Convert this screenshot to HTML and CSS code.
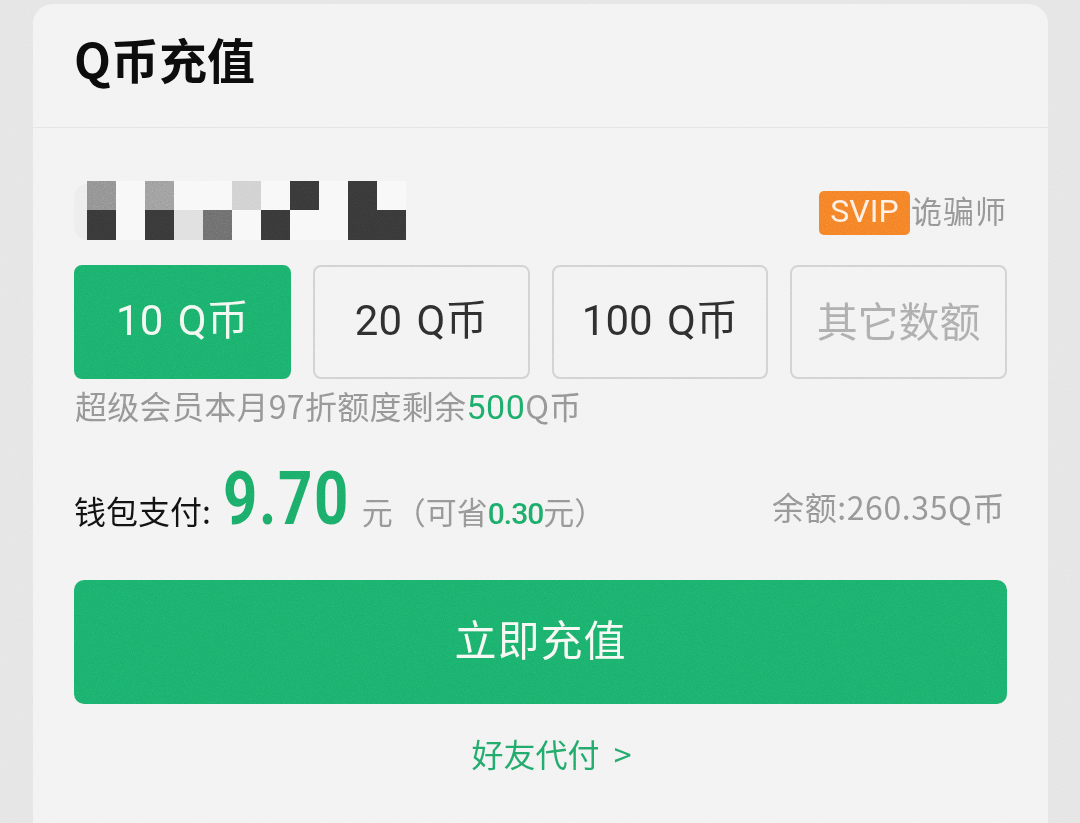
FILE: index.html
```html
<!DOCTYPE html>
<html lang="zh-CN">
<head>
    <meta charset="UTF-8">
    <meta name="viewport" content="width=device-width, initial-scale=1.0">
    <title>Q币充值</title>
    <link rel="stylesheet" href="styles.css">
</head>
<body>
    <div class="card">
        <div class="card-head">
            <h2>Q币充值</h2>
        </div>
        <div class="card-body">
            <div class="account-row">
                <div class="mosaic">
                    <i class="blob"></i>
                    <i class="c-mid"></i><i class="c-light"></i><i class="c-mid2"></i><i class="c-light"></i><i class="c-light"></i><i class="c-pale"></i><i class="c-light"></i><i class="c-dark"></i><i class="c-light"></i><i class="c-dark"></i><i class="c-light"></i>
                    <i class="c-dark"></i><i class="c-light"></i><i class="c-dark"></i><i class="c-pale2"></i><i class="c-mid3"></i><i class="c-light"></i><i class="c-dark"></i><i class="c-light"></i><i class="c-light"></i><i class="c-dark"></i><i class="c-dark"></i>
                </div>
                <div class="vip">
                    <span class="vip-badge">SVIP</span><span class="vip-name">诡骗师</span>
                </div>
            </div>

            <div class="amounts">
                <div class="amount active">10 Q币</div>
                <div class="amount">20 Q币</div>
                <div class="amount">100 Q币</div>
                <div class="amount other">其它数额</div>
            </div>

            <p class="quota">超级会员本月97折额度剩余<span class="green">500</span>Q币</p>

            <div class="pay-row">
                <div class="pay-left">
                    <span class="pay-label">钱包支付:</span>
                    <span class="price">9.70</span>
                    <span class="unit">元</span>
                    <span class="save">（可省<b class="green">0.30</b>元）</span>
                </div>
                <div class="balance">余额:260.35Q币</div>
            </div>

            <button class="submit">立即充值</button>
            <div class="friend-pay">好友代付<span class="arrow">&gt;</span></div>
        </div>
    </div>

    <!-- film grain over the whole shot -->
    <svg class="grain" width="1080" height="823" aria-hidden="true">
        <filter id="noise">
            <feTurbulence type="fractalNoise" baseFrequency="0.9" numOctaves="2" seed="4"/>
            <feColorMatrix type="saturate" values="0"/>
        </filter>
        <rect width="1080" height="823" filter="url(#noise)"/>
    </svg>
</body>
</html>
```

FILE: styles.css
```css
body {
    margin: 0;
    height: 823px;
    overflow: hidden;
    background-color: #e4e4e4;
    font-family: "Noto Sans CJK SC", "Noto Sans", sans-serif;
    color: #909090;
}
.card {
    margin: 4px 32px 0 33px;
    height: 840px;
    background: #f2f2f2;
    border-radius: 20px;
}
.card-head {
    height: 124px;
    box-sizing: border-box;
    border-bottom: 1px solid #e2e2e2;
    padding-left: 41px;
}
h2 {
    margin: 0;
    padding-top: 20px;
    font-size: 48px;
    line-height: 68px;
    font-weight: 700;
    color: #0b0b0b;
}
.card-body {
    padding: 0 41px;
}
.account-row {
    display: flex;
    justify-content: space-between;
    align-items: flex-start;
    height: 137px;
    padding-top: 53px;
    box-sizing: border-box;
}
.mosaic {
    position: relative;
    display: grid;
    grid-template-columns: repeat(11, 29px);
    grid-template-rows: 29px 30px;
    margin-left: 13px;
}
.blob {
    position: absolute;
    left: -13px;
    top: 3px;
    width: 30px;
    height: 56px;
    border-radius: 14px 0 0 14px;
    background: #ececec;
    z-index: 0;
}
.mosaic i:not(.blob) {
    position: relative;
}
.c-dark { background: #363636; }
.c-mid { background: #8e8e8e; }
.c-mid2 { background: #9b9b9b; }
.c-mid3 { background: #6a6a6a; }
.c-pale { background: #cfcfcf; }
.c-pale2 { background: #dedede; }
.c-light { background: #f8f8f8; }
.vip {
    display: flex;
    align-items: flex-start;
    margin-top: 10px;
}
.vip-badge {
    width: 91px;
    height: 44px;
    border-radius: 5px;
    background: #f47d26;
    color: #fdf0e2;
    font-family: Roboto, sans-serif;
    font-size: 32px;
    line-height: 40px;
    text-align: center;
}
.vip-name {
    font-size: 31px;
    line-height: 38px;
    letter-spacing: 1px;
    margin-left: 1px;
    color: #8f8f8f;
}
.amounts {
    display: grid;
    grid-template-columns: repeat(4, 1fr);
    gap: 22px;
}
.amount {
    height: 114px;
    box-sizing: border-box;
    border: 2px solid #cfcfcf;
    border-radius: 8px;
    padding-bottom: 12px;
    display: flex;
    align-items: center;
    justify-content: center;
    font-family: Roboto, "Noto Sans CJK SC", sans-serif;
    font-size: 42px;
    word-spacing: 4px;
    color: #2c2c2c;
}
.amount.active {
    background: #1aad68;
    border-color: #1aad68;
    color: #f2f7f1;
}
.amount.other {
    font-size: 41px;
    padding-bottom: 6px;
    color: #a9a9a9;
}
.quota {
    margin: 1px 0 0 1px;
    font-size: 32px;
    line-height: 50px;
    letter-spacing: 0.3px;
    color: #8f8f8f;
}
.quota .green {
    font-family: Roboto, sans-serif;
    font-size: 34px;
    letter-spacing: 0.5px;
}
.green {
    color: #1aa864;
}
.pay-row {
    display: flex;
    justify-content: space-between;
    align-items: flex-start;
    margin-top: 22px;
    height: 90px;
}
.pay-left {
    display: flex;
    align-items: baseline;
}
.pay-label {
    font-size: 32px;
    color: #111;
}
.price {
    display: inline-block;
    font-family: Roboto, sans-serif;
    font-weight: 700;
    font-size: 74px;
    letter-spacing: 2px;
    line-height: 90px;
    color: #1aa864;
    margin-left: 12px;
    margin-right: -29px;
    transform: scaleX(0.81);
    transform-origin: left;
}
.unit {
    font-size: 31px;
    margin-left: 11px;
}
.save {
    font-size: 31px;
    margin-left: 2px;
}
.save b {
    font-family: Roboto, sans-serif;
    font-weight: 500;
    font-size: 30px;
    letter-spacing: -1px;
}
.balance {
    font-size: 32px;
    letter-spacing: 0.6px;
    line-height: 50px;
    margin-top: 27px;
    margin-right: 2px;
}
.submit {
    display: block;
    width: 100%;
    height: 124px;
    margin-top: 36px;
    padding-bottom: 10px;
    border: none;
    border-radius: 10px;
    background-color: #1aad68;
    color: #f6f8f3;
    font-family: inherit;
    font-size: 42px;
    letter-spacing: 1px;
}
.friend-pay {
    margin-top: 24px;
    padding-left: 22px;
    text-align: center;
    font-size: 32px;
    line-height: 50px;
    color: #1fa565;
}
.arrow {
    margin-left: 14px;
}
.grain {
    position: absolute;
    left: 0;
    top: 0;
    opacity: 0.4;
    mix-blend-mode: overlay;
    pointer-events: none;
}
```
